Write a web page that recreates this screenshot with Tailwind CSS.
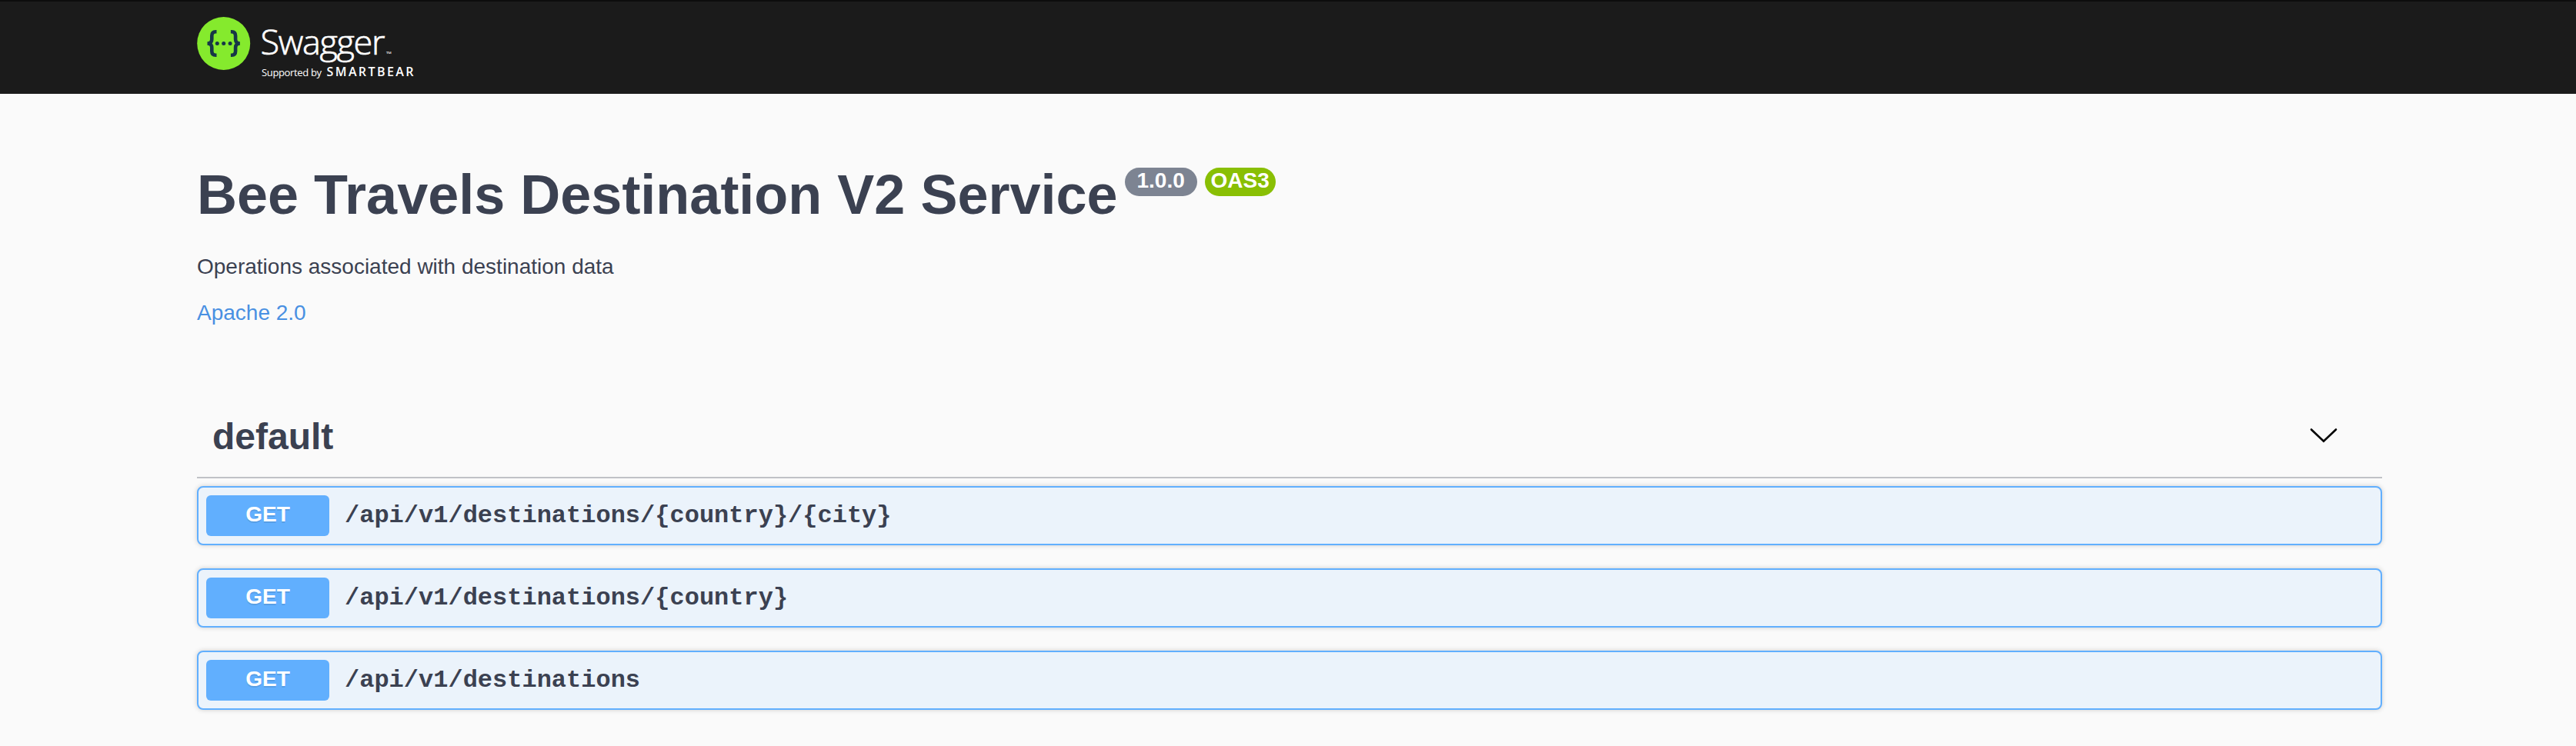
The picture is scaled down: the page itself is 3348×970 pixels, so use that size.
<!DOCTYPE html>
<html lang="en">
<head>
<meta charset="utf-8">
<title>Swagger UI</title>
<script src="https://cdn.jsdelivr.net/npm/@tailwindcss/browser@4"></script>
</head>
<body class="h-[970px] overflow-hidden bg-[#fafafa] text-[#3b4151] font-['Liberation_Sans',Arial,sans-serif]">
<header class="h-[122px] border-t-2 border-[#0d0d0d] bg-[#1b1b1b] px-64">
  <svg class="block h-[120px] w-[300px]" viewBox="256 2 300 120" fill="none">
    <circle cx="290.7" cy="56.5" r="34.5" fill="#85ea2d"/>
    <g stroke="#173647" stroke-width="4.6">
      <path d="M281.5 41.2h-1.2q-5 0-5 5.3v4.4q0 5.6-5.8 5.6q5.8 0 5.8 5.6v4.4q0 5.3 5 5.3h1.2"/>
      <path d="M299.9 41.2h1.2q5 0 5 5.3v4.4q0 5.6 5.8 5.6q-5.8 0-5.8 5.6v4.4q0 5.3-5 5.3h-1.2"/>
    </g>
    <g fill="#173647"><circle cx="282.3" cy="56.5" r="2.5"/><circle cx="290.7" cy="56.5" r="2.5"/><circle cx="299.1" cy="56.5" r="2.5"/></g>
    <g fill="#fff" font-family="Open Sans, Noto Sans, sans-serif">
      <text x="338.5" y="70.5" font-size="45" font-weight="300" stroke="#fff" stroke-width="0.7" textLength="162" lengthAdjust="spacing">Swagger</text>
      <text x="502" y="73" font-size="8" textLength="7" lengthAdjust="spacingAndGlyphs">™</text>
      <text x="340" y="98.5" font-size="13" textLength="78">Supported by</text>
      <text x="424.5" y="98.5" font-size="16" font-weight="600" textLength="113">SMARTBEAR</text>
    </g>
  </svg>
</header>
<main class="pr-[248px] pl-[252px]">
  <section class="px-1 pt-[90px]">
    <div class="flex items-start">
      <h1 class="text-[72px] leading-[82px] font-bold whitespace-nowrap">Bee Travels Destination V2 Service</h1>
      <div class="ml-[9px] mt-1.5 flex gap-2.5 text-[28px] leading-[33px] font-bold text-white">
        <span class="h-[37px] w-[94px] rounded-full bg-[#7d8492] text-center">1.0.0</span>
        <span class="h-[37px] w-[92px] rounded-full bg-[#89bf04] text-center">OAS3</span>
      </div>
    </div>
    <p class="mt-[37px] text-[28px] leading-8">Operations associated with destination data</p>
    <a class="mt-7 block text-[28px] leading-8 text-[#4990e2]">Apache 2.0</a>
  </section>
  <section class="mt-[99px] px-1">
    <h2 class="flex h-[100px] items-center justify-between border-b-2 border-[#3b4151]/30 pr-[58px] pb-1.5 pl-5 text-[48px] leading-[56px] font-bold">
      <span>default</span>
      <svg class="mb-1 h-5 w-9" viewBox="0 0 36 20" fill="none" stroke="#000" stroke-width="2.6" stroke-linecap="round"><path d="M2 2.5L18 17.7L34 2.5"/></svg>
    </h2>
    <div class="mt-2.5 flex flex-col gap-[30px]">
      <div class="flex h-[77px] items-center rounded-lg border-2 border-[#61affe] bg-[#ebf3fb] px-2.5 shadow-[0_0_6px_rgba(0,0,0,0.19)]">
        <span class="h-[53px] w-40 rounded-md bg-[#61affe] text-center text-[28px] leading-[49px] font-bold text-white [text-shadow:0_2px_0_rgba(0,0,0,0.1)]">GET</span>
        <span class="pl-5 font-['Liberation_Mono',monospace] text-[32px] leading-9 font-bold">/api/v1/destinations/{country}/{city}</span>
      </div>
      <div class="flex h-[77px] items-center rounded-lg border-2 border-[#61affe] bg-[#ebf3fb] px-2.5 shadow-[0_0_6px_rgba(0,0,0,0.19)]">
        <span class="h-[53px] w-40 rounded-md bg-[#61affe] text-center text-[28px] leading-[49px] font-bold text-white [text-shadow:0_2px_0_rgba(0,0,0,0.1)]">GET</span>
        <span class="pl-5 font-['Liberation_Mono',monospace] text-[32px] leading-9 font-bold">/api/v1/destinations/{country}</span>
      </div>
      <div class="flex h-[77px] items-center rounded-lg border-2 border-[#61affe] bg-[#ebf3fb] px-2.5 shadow-[0_0_6px_rgba(0,0,0,0.19)]">
        <span class="h-[53px] w-40 rounded-md bg-[#61affe] text-center text-[28px] leading-[49px] font-bold text-white [text-shadow:0_2px_0_rgba(0,0,0,0.1)]">GET</span>
        <span class="pl-5 font-['Liberation_Mono',monospace] text-[32px] leading-9 font-bold">/api/v1/destinations</span>
      </div>
    </div>
  </section>
</main>
</body>
</html>
